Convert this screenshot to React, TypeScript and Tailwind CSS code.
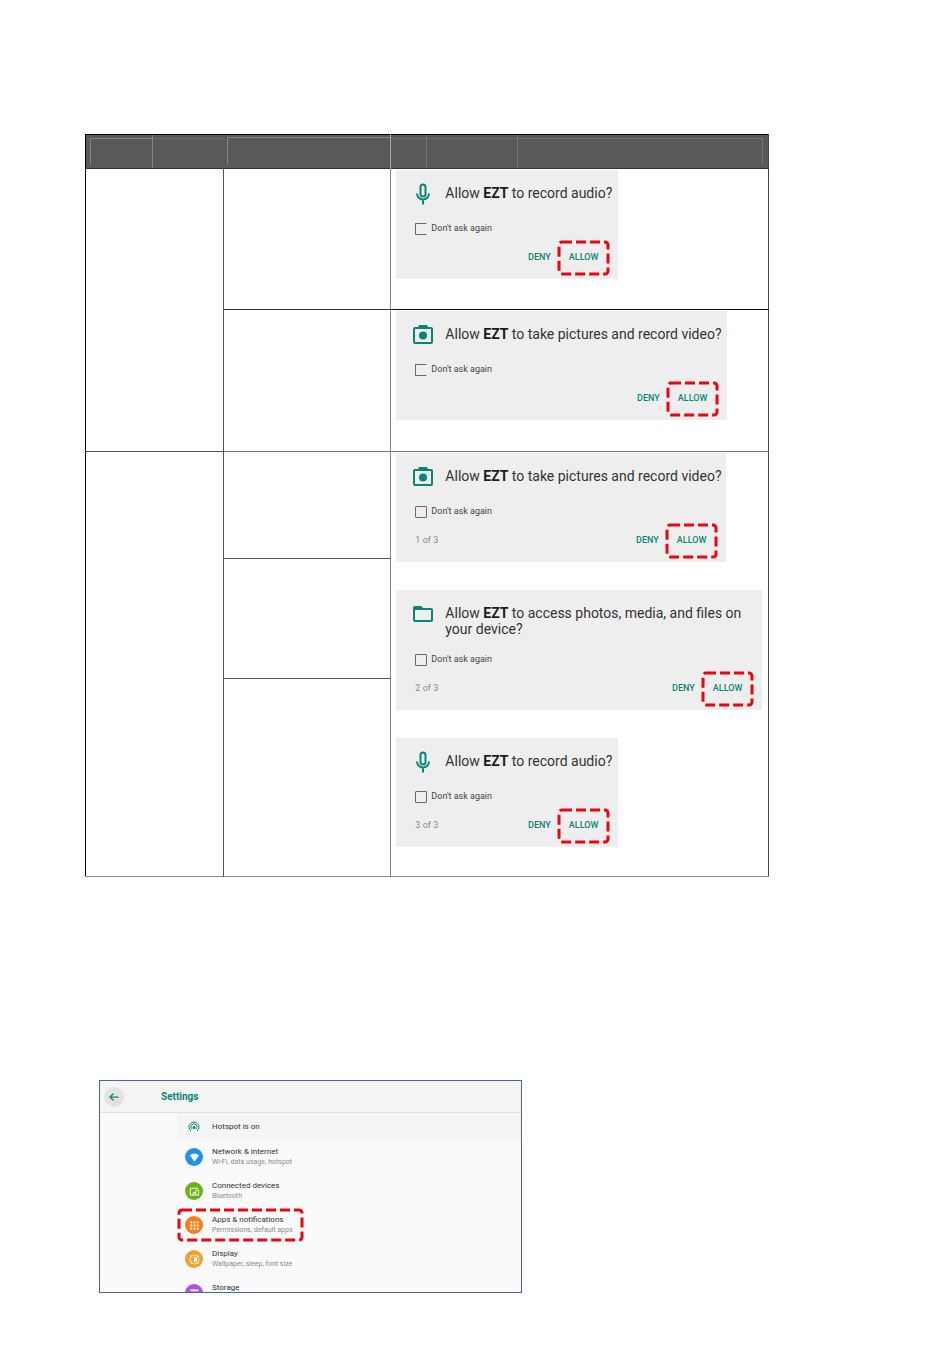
import type { ReactNode } from "react";
import { clsx } from "clsx";

const appName = <b className="font-bold text-[#1c1c1c]">EZT</b>;

function DashedFrame({ className }: { className: string }) {
  return (
    <svg className={clsx("pointer-events-none absolute overflow-visible", className)}>
      <rect
        width="100%"
        height="100%"
        rx="3"
        fill="none"
        stroke="#ea0510"
        strokeWidth="3"
        strokeDasharray="10 4"
      />
    </svg>
  );
}

function MicIcon() {
  return (
    <svg viewBox="0 0 24 24" className="h-6 w-6" fill="none" stroke="#0b8573" strokeWidth="2">
      <rect x="9.5" y="2.5" width="5" height="12" rx="2.5" />
      <path d="M6 11.5a6 6 0 0 0 12 0M12 17.5v5" />
    </svg>
  );
}

function CameraIcon() {
  return (
    <svg viewBox="0 0 24 24" className="h-6 w-6" fill="#0b8573">
      <path
        fillRule="evenodd"
        d="M7 4l1-2h8l1 2h3a2 2 0 0 1 2 2v13a2 2 0 0 1-2 2H4a2 2 0 0 1-2-2V6a2 2 0 0 1 2-2zM4 6v13h16V6z"
      />
      <circle cx="12" cy="12.5" r="4" />
    </svg>
  );
}

function FolderIcon() {
  return (
    <svg viewBox="0 0 24 24" className="h-6 w-6" fill="#0b8573">
      <path d="M20 6h-8l-2-2H4c-1.1 0-2 .9-2 2v12c0 1.1.9 2 2 2h16c1.1 0 2-.9 2-2V8c0-1.1-.9-2-2-2zm0 12H4V8h16z" />
    </svg>
  );
}

interface PermissionCardProps {
  icon: ReactNode;
  className: string;
  children: ReactNode;
  step?: string;
  openBox?: boolean;
}

function PermissionCard({ icon, className, children, step, openBox }: PermissionCardProps) {
  return (
    <div className={clsx("max-w-full bg-[#eeeeee] pt-[15px] pb-[13px]", className)}>
      <div className="flex min-h-[21px] items-start gap-[10px] pl-[15px]">
        <span className="-mt-[3px] shrink-0">{icon}</span>
        <p className="text-[14px] leading-4 text-[#333]">{children}</p>
      </div>
      <label className="mt-[15px] flex h-4 items-center gap-1 pl-[19px] text-[9px] text-[#444]">
        <input
          type="checkbox"
          className={clsx(
            "h-3 w-3 appearance-none rounded-[1px] border border-[#6a6a6a]",
            openBox && "border-r-transparent"
          )}
        />
        Don't ask again
      </label>
      <div className="mt-[13px] flex h-4 items-center pr-5 pl-[19px] text-[9px]">
        {step ? <span className="text-[#8a8a8a]">{step}</span> : null}
        <div className="ml-auto flex gap-[18px] font-medium text-[#0b8573]">
          <button type="button" className="h-4">
            DENY
          </button>
          <button type="button" className="relative h-4">
            ALLOW
            <DashedFrame className="-top-[8px] -left-[10px] h-8 w-[49px]" />
          </button>
        </div>
      </div>
    </div>
  );
}

function PermissionTable() {
  return (
    <table className="h-[743px] w-full table-fixed border-collapse border border-black border-r-[#444] border-b-[#888]">
      <colgroup>
        <col className="w-[20.15%]" />
        <col className="w-[24.56%]" />
        <col />
      </colgroup>
      <thead>
        <tr className="h-[34px] border-b border-[#333] bg-[#595959]">
          <th className="p-0">
            <div className="flex h-[33px]">
              <div className="mt-[3px] mb-[3px] ml-1 w-[62px] border-t border-l border-[#858585]" />
              <div className="flex-1 border-l border-[#858585] pt-[3px]">
                <div className="border-t border-[#6e6e6e]" />
              </div>
            </div>
          </th>
          <th className="border-r border-[#aaa] p-0">
            <div className="mb-[3px] ml-1 h-[27px] border-t border-l border-[#858585]" />
          </th>
          <th className="p-0">
            <div className="flex h-[33px] pr-[5px]">
              <div className="w-[35px] pt-[3px]">
                <div className="border-t border-[#6e6e6e]" />
              </div>
              <div className="w-[91px] border-l border-[#757575] pt-[3px]">
                <div className="border-t border-[#6e6e6e]" />
              </div>
              <div className="flex-1 border-l border-[#757575] pt-[3px] pb-[3px]">
                <div className="h-full border-t border-r border-[#757575]" />
              </div>
            </div>
          </th>
        </tr>
      </thead>
      <tbody className="align-top">
        <tr className="h-[141px]">
          <td rowSpan={2} className="border-r border-b border-[#555]" />
          <td className="border-r border-b border-[#333] border-r-[#888]" />
          <td className="border-b border-[#111] px-[5px] pt-px">
            <PermissionCard icon={<MicIcon />} className="w-[222px]" openBox>
              Allow {appName} to record audio?
            </PermissionCard>
          </td>
        </tr>
        <tr className="h-[142px]">
          <td className="border-r border-b border-[#777] border-r-[#888]" />
          <td className="border-b border-[#777] px-[5px] pt-px">
            <PermissionCard icon={<CameraIcon />} className="w-[331px]" openBox>
              Allow {appName} to take pictures and record video?
            </PermissionCard>
          </td>
        </tr>
        <tr className="h-[107px]">
          <td rowSpan={3} className="border-r border-[#555]" />
          <td className="border-r border-b border-[#555] border-r-[#888]" />
          <td rowSpan={3} className="px-[5px] pt-px">
            <div className="flex flex-col gap-7">
              <PermissionCard icon={<CameraIcon />} className="w-[330px]" step="1 of 3">
                Allow {appName} to take pictures and record video?
              </PermissionCard>
              <PermissionCard icon={<FolderIcon />} className="w-[366px]" step="2 of 3">
                Allow {appName} to access photos, media, and files on your device?
              </PermissionCard>
              <PermissionCard icon={<MicIcon />} className="w-[222px]" step="3 of 3">
                Allow {appName} to record audio?
              </PermissionCard>
            </div>
          </td>
        </tr>
        <tr className="h-[120px]">
          <td className="border-r border-b border-[#555] border-r-[#888]" />
        </tr>
        <tr className="h-[198px]">
          <td className="border-r border-[#888]" />
        </tr>
      </tbody>
    </table>
  );
}

const settings = [
  {
    title: "Network & internet",
    detail: "Wi-Fi, data usage, hotspot",
    color: "bg-[#2490ee]",
    glyph: <path d="M2 7q10-8 20 0L12 21z" fill="#fff" stroke="none" />,
  },
  {
    title: "Connected devices",
    detail: "Bluetooth",
    color: "bg-[#69b315]",
    glyph: <path d="M3 20V5h17M2 20h7M15 9h6v11h-6zM9 20v-6h4v6z" />,
  },
  {
    title: "Apps & notifications",
    detail: "Permissions, default apps",
    color: "bg-[#f77f17]",
    glyph: <path d="M3 5h4m3 0h4m3 0h4M3 12h4m3 0h4m3 0h4M3 19h4m3 0h4m3 0h4" strokeWidth="4" />,
    framed: true,
  },
  {
    title: "Display",
    detail: "Wallpaper, sleep, font size",
    color: "bg-[#f2a02e]",
    glyph: (
      <>
        <path d="M4 4h5l3-3 3 3h5v5l3 3-3 3v5h-5l-3 3-3-3H4v-5l-3-3 3-3z" />
        <path d="M12 7a5 5 0 0 1 0 10z" fill="#fff" />
      </>
    ),
  },
  {
    title: "Storage",
    detail: "",
    color: "bg-[#b44fe0]",
    glyph: <path d="M3 5h18M3 12h18M3 19h18" strokeWidth="4" />,
  },
];

function SettingsPanel() {
  return (
    <section className="h-[213px] max-w-[423px] overflow-hidden border border-[#4763b5] bg-[#fafafa]">
      <header className="flex h-8 items-center border-b border-[#e2e2e2] bg-[#f4f4f4] pl-1">
        <button
          type="button"
          aria-label="Back"
          className="flex h-5 w-5 items-center justify-center rounded-full bg-[#e2e2e2]"
        >
          <svg viewBox="0 0 24 24" className="h-3 w-3" fill="none" stroke="#0b8573" strokeWidth="2.5">
            <path d="M21 12H4M11 5l-7 7 7 7" />
          </svg>
        </button>
        <h1 className="ml-[37px] text-[10px] font-bold text-[#0b8573]">Settings</h1>
      </header>
      <div className="ml-[77px]">
        <div className="flex h-[27px] items-center gap-3 bg-[#f4f4f4] pl-[11px] text-[8px] text-[#333]">
          <svg viewBox="0 0 24 24" className="h-3 w-3" fill="none" stroke="#0b8573" strokeWidth="2">
            <path d="M6 20a10 10 0 1 1 12 0M8.5 16.5a6 6 0 1 1 7 0" />
            <circle cx="12" cy="13" r="2" fill="#0b8573" />
          </svg>
          Hotspot is on
        </div>
        <ul>
          {settings.map((s) => (
            <li key={s.title} className="relative flex h-[34px] items-center gap-[9px] pl-2">
              <span
                className={clsx(
                  "flex h-[18px] w-[18px] shrink-0 items-center justify-center rounded-full",
                  s.color
                )}
              >
                <svg viewBox="0 0 24 24" className="h-[11px] w-[11px]" fill="none" stroke="#fff" strokeWidth="2">
                  {s.glyph}
                </svg>
              </span>
              <div className="h-5">
                <div className="text-[8px] leading-[10px] text-[#333]">{s.title}</div>
                <div className="text-[7px] leading-[10px] text-[#8a8a8a]">{s.detail}</div>
              </div>
              {s.framed ? <DashedFrame className="top-[2px] left-[2px] h-[30px] w-[123px]" /> : null}
            </li>
          ))}
        </ul>
      </div>
    </section>
  );
}

export default function App() {
  return (
    <main className="min-h-screen bg-white pt-[134px] pr-[181px] pb-[76px] pl-[85px] font-['Roboto',sans-serif]">
      <PermissionTable />
      <div className="mt-[203px] ml-[14px]">
        <SettingsPanel />
      </div>
    </main>
  );
}
